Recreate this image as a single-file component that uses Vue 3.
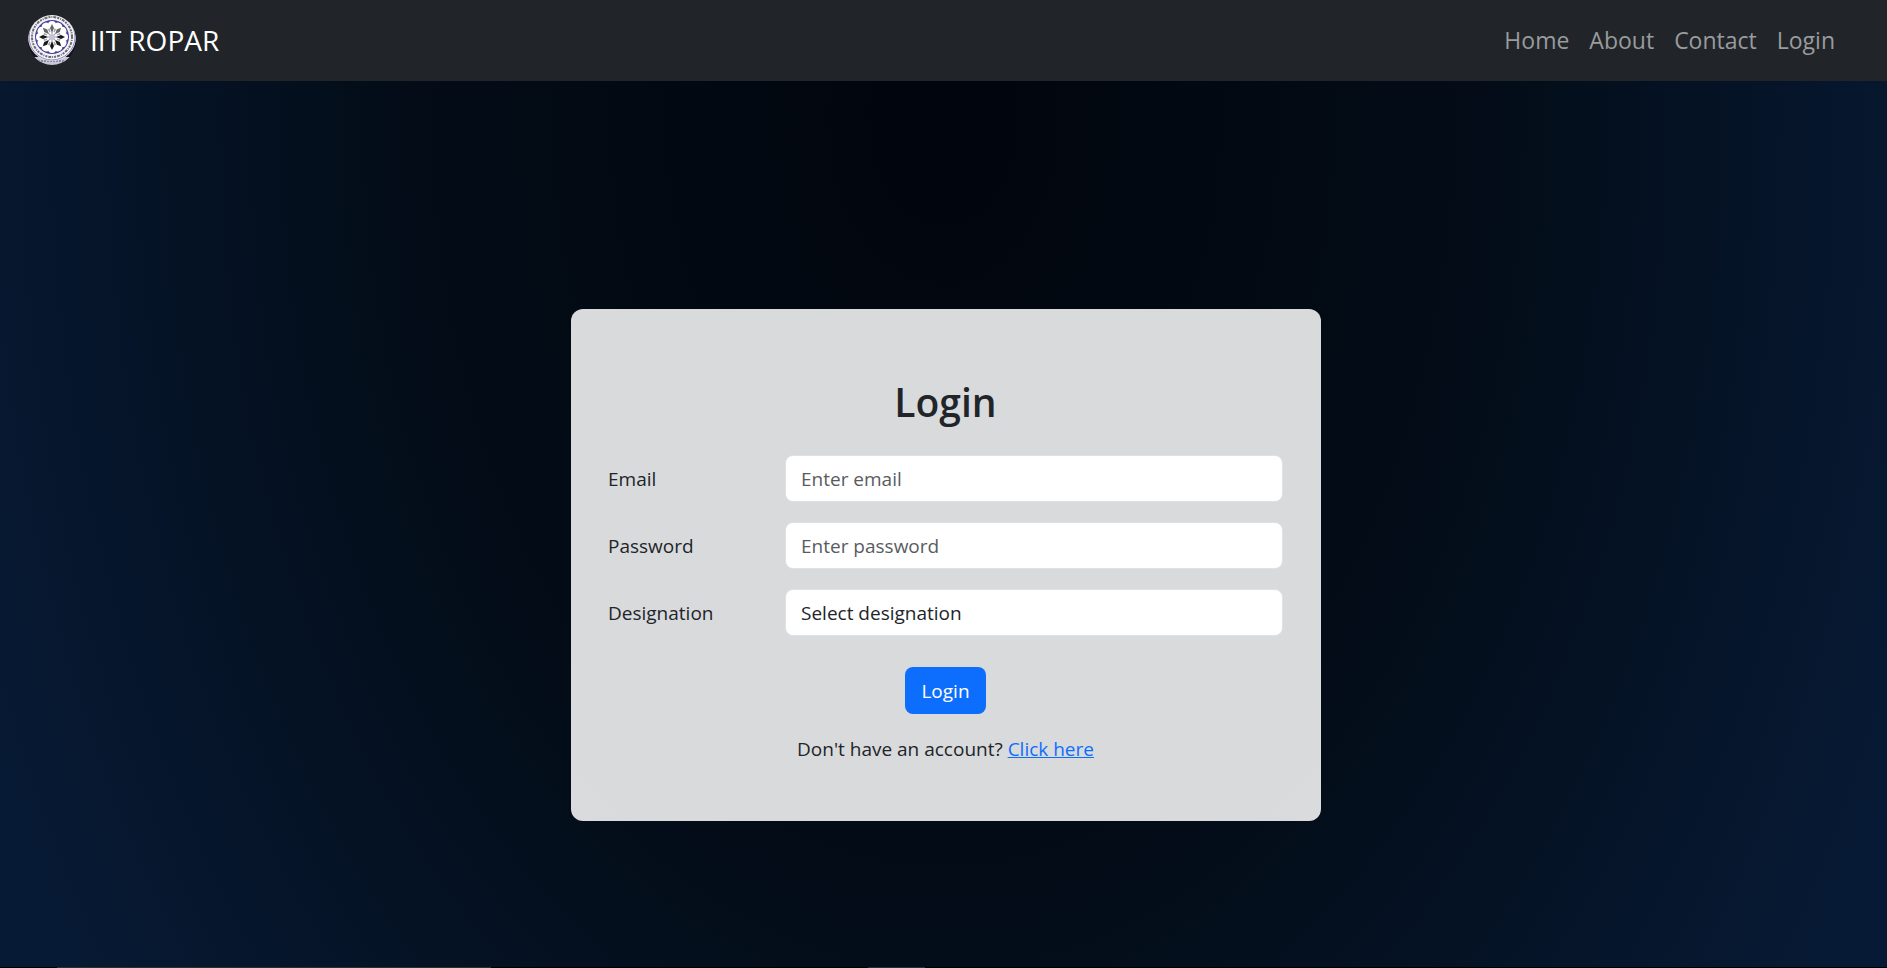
<template>
  <div class="page">
    <nav class="navbar">
      <a class="brand" href="#">
        <svg class="logo" viewBox="0 0 48 50" aria-hidden="true">
          <defs>
            <clipPath id="seal"><ellipse cx="24" cy="25" rx="24" ry="25" /></clipPath>
          </defs>
          <g clip-path="url(#seal)">
            <rect width="48" height="50" fill="#14121f" />
            <path d="M4 42h40v8H4z" fill="#c9c9d6" />
            <path d="M10 46h28" stroke="#8e8ca2" stroke-width="2" stroke-dasharray="2 1" />
            <circle cx="24" cy="22" r="24" fill="#f4f4f8" />
            <circle cx="24" cy="22" r="23" fill="none" stroke="#8d88bd" />
            <circle cx="24" cy="22" r="20" fill="none" stroke="#6b6a75" stroke-width="2" stroke-dasharray="2 1 1 1 3 1" />
            <circle cx="24" cy="22" r="17" fill="#4a429c" />
            <circle v-for="n in 12" :key="'p' + n" cx="24" cy="10" r="4" fill="#fff" :transform="`rotate(${n * 30} 24 22)`" />
            <circle cx="24" cy="22" r="13" fill="#fff" />
            <g v-for="n in 8" :key="n" :transform="`rotate(${n * 45} 24 22)`">
              <path d="M24 9l2 4-2 5-2-5z" :fill="n > 1 && n < 7 ? '#15151a' : '#66666d'" />
              <path d="M24 17v3M20 14l2 3M28 14l-2 3" stroke="#a0a0a8" fill="none" />
            </g>
            <circle cx="24" cy="22" r="3" fill="#c5c5da" />
          </g>
        </svg>
        <span>IIT ROPAR</span>
      </a>
      <ul class="links">
        <li v-for="link in links" :key="link"><a href="#">{{ link }}</a></li>
      </ul>
    </nav>

    <main class="content">
      <form class="card" @submit.prevent>
        <h2>Login</h2>
        <div class="row">
          <label for="email">Email</label>
          <input id="email" v-model="email" type="email" placeholder="Enter email">
        </div>
        <div class="row">
          <label for="password">Password</label>
          <input id="password" v-model="password" type="password" placeholder="Enter password">
        </div>
        <div class="row">
          <label for="designation">Designation</label>
          <select id="designation" v-model="designation">
            <option value="">Select designation</option>
          </select>
        </div>
        <button type="submit">Login</button>
        <p>Don't have an account? <a href="#">Click here</a></p>
      </form>
    </main>
    <div class="edge"><span class="edge-wide"></span><span class="edge-small"></span></div>
  </div>
</template>

<script setup>
import { ref } from 'vue'

const links = ['Home', 'About', 'Contact', 'Login']
const email = ref('')
const password = ref('')
const designation = ref('')
</script>

<style>
body {
  margin: 0;
}
</style>

<style scoped>
.page {
  display: flex;
  flex-direction: column;
  min-height: 100vh;
  font-family: "Open Sans", "Noto Sans", sans-serif;
  font-size: 19px;
  line-height: 30px;
  color: #212529;
  background: radial-gradient(ellipse 56% 160% at 50% 12%, #01050d 0%, #030c17 50%, #071a35 100%);
}

.page, .page * {
  box-sizing: border-box;
}

.navbar {
  display: flex;
  align-items: center;
  justify-content: space-between;
  height: 81px;
  padding: 0 52px 2px 28px;
  background: #212529;
}

.brand {
  display: flex;
  align-items: center;
  gap: 14px;
  font-size: 28px;
  color: #fff;
  text-decoration: none;
}

.logo {
  width: 48px;
  height: 50px;
}

.links {
  display: flex;
  gap: 20px;
  margin: 0;
  padding: 0;
  list-style: none;
  font-size: 23px;
}

.links a {
  color: #999b9d;
  text-decoration: none;
}

.content {
  flex: 1;
  display: flex;
  align-items: center;
  justify-content: center;
  padding: 82px 0 0 5px;
}

.card {
  display: flex;
  flex-direction: column;
  width: 750px;
  max-width: 100%;
  padding: 69px 38px 57px 37px;
  border-radius: 12px;
  background: rgba(255, 255, 255, 0.85);
}

h2 {
  margin: 0 0 29px;
  font-size: 39px;
  font-weight: 600;
  line-height: 48px;
  text-align: center;
}

.row {
  display: flex;
  align-items: center;
  margin-bottom: 20px;
}

label {
  flex: 1;
}

input, select {
  width: 498px;
  height: 47px;
  padding: 0 15px;
  border: 1px solid #dee2e6;
  border-radius: 8px;
  background: #fff;
  font: inherit;
  color: #212529;
  appearance: none;
}

input::placeholder {
  color: #595c5f;
  opacity: 1;
}

button {
  align-self: center;
  height: 47px;
  margin: 11px 0 20px;
  padding: 0 16px;
  border: 0;
  border-radius: 8px;
  background: #0d6efd;
  color: #fff;
  font: inherit;
}

p {
  margin: 0;
  text-align: center;
}

p a {
  color: #0d6efd;
}

.edge {
  display: flex;
  height: 1px;
  background: #000;
}

.edge-wide {
  width: 23%;
  margin: 0 20% 0 3%;
  background: #2b2e33;
}

.edge-small {
  width: 3%;
  background: #2b2e33;
}
</style>
